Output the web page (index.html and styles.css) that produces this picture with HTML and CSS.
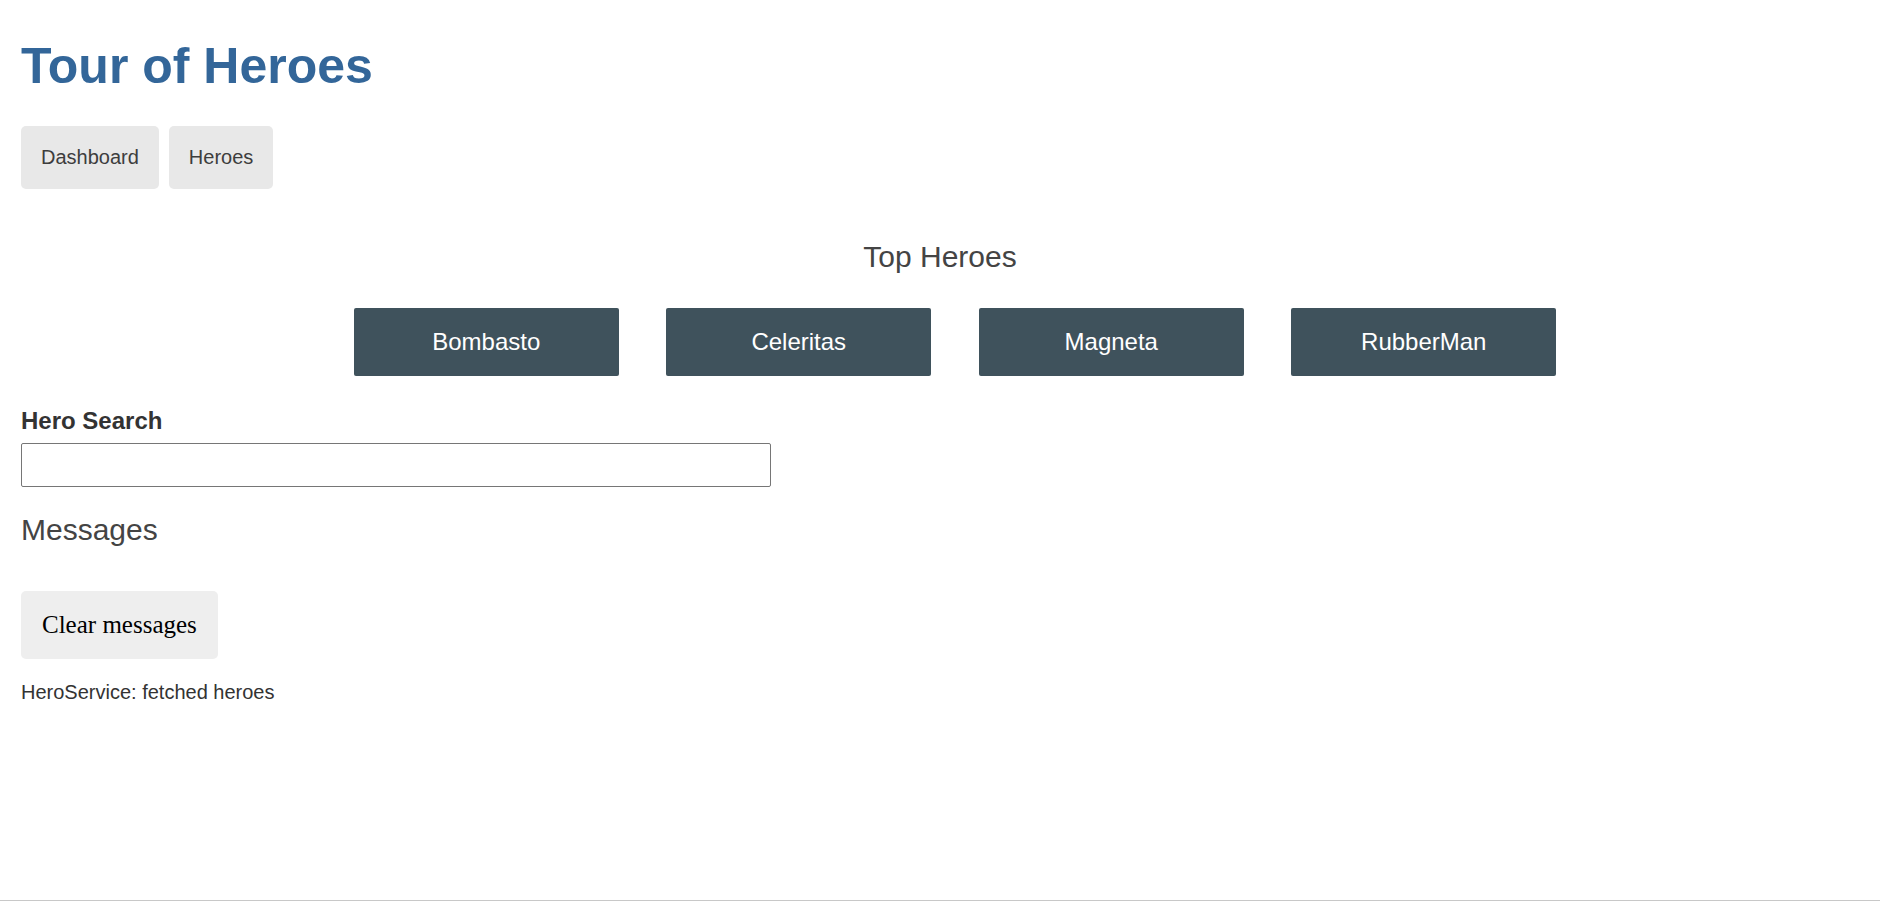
FILE: index.html
```
<!DOCTYPE html>
<html>
  <head>
    <link rel="stylesheet" href="styles.css">

    <title>Tour of Heroes</title>
  </head>

  <body>
    <h1 class="title">Tour of Heroes</h1>

    <nav class="nav">
      <a href="#" class="navLink">Dashboard</a>
      <a href="#" class="navLink">Heroes</a>
    </nav>

    <h2 class="topTitle">Top Heroes</h2>

    <div class="heroesMenu">
      <a href="#" class="hero">Bombasto</a>
      <a href="#" class="hero">Celeritas</a>
      <a href="#" class="hero">Magneta</a>
      <a href="#" class="hero">RubberMan</a>
    </div>

    <label for="search-box" class="searchLabel">Hero Search</label>
    <input id="search-box" type="text" class="searchBox">

    <h2 class="msgTitle">Messages</h2>

    <button class="clear">Clear messages</button>

    <div class="msg">HeroService: fetched heroes</div>
  </body>
</html>
```

FILE: styles.css
```
html{
  height: 100%;
}

body{
  margin: 0;
  padding: 1px 21px 0 21px;
  min-height: 100%;
  box-sizing: border-box;
  border-bottom: 1px solid #c8c8c8;
  color: #333;
  font-family: "Liberation Sans", Arial, Helvetica, sans-serif;
  font-size: 20px;
}

.title{
  margin: 37px 0 0 0;
  color: #369;
  font-size: 50px;
  line-height: 57px;
  font-weight: bold;
}

.nav{
  display: flex;
  gap: 10px;
  margin-top: 31px;
}

.navLink{
  padding: 20px;
  line-height: 23px;
  background-color: #e8e8e8;
  color: #3d3d3d;
  border-radius: 5px;
  text-decoration: none;
}

.topTitle{
  margin: 51px 0 0 0;
  text-align: center;
  color: #444;
  font-size: 30px;
  line-height: 34px;
  font-weight: normal;
}

.heroesMenu{
  display: flex;
  justify-content: center;
  gap: 47.5px;
  margin-top: 34px;
  padding-left: 30px;
}

.hero{
  width: 265px;
  box-sizing: border-box;
  padding: 20px 0;
  background-color: #3f525c;
  color: #fff;
  border-radius: 2px;
  font-size: 24px;
  line-height: 28px;
  text-align: center;
  text-decoration: none;
}

.searchLabel{
  display: block;
  margin-top: 31px;
  font-size: 24px;
  line-height: 27px;
  font-weight: bold;
}

.searchBox{
  display: block;
  margin-top: 9px;
  width: 750px;
  height: 44px;
  box-sizing: border-box;
  border: 1px solid #767676;
  border-radius: 2px;
  padding: 8px;
  font-size: 20px;
}

.msgTitle{
  margin: 26px 0 0 0;
  color: #444;
  font-size: 30px;
  line-height: 34px;
  font-weight: normal;
}

.clear{
  display: block;
  margin-top: 44px;
  padding: 20px 21px;
  background-color: #eee;
  color: black;
  border: none;
  border-radius: 5px;
  font-family: "Liberation Serif", Georgia, serif;
  font-size: 25px;
  line-height: 28px;
  cursor: pointer;
}

.msg{
  margin-top: 22px;
  line-height: 23px;
}
```
